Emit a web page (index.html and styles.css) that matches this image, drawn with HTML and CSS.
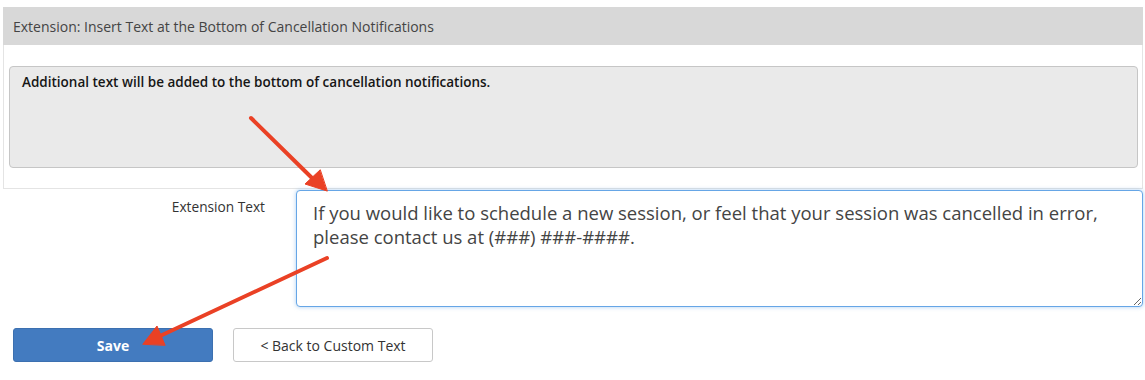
FILE: index.html
```html
<!DOCTYPE html>
<html lang="en">
<head>
  <meta charset="UTF-8" />
  <title>Cancellation Notification Extension</title>
  <link rel="stylesheet" href="styles.css">
</head>
<body>
  <div class="page">
    <div class="panel">
      <div class="panel-head">Extension: Insert Text at the Bottom of Cancellation Notifications</div>
      <div class="panel-body">
        <div class="info">Additional text will be added to the bottom of cancellation notifications.</div>
      </div>
    </div>

    <div class="form-row">
      <label class="form-label" for="extText">Extension Text</label>
      <textarea id="extText" class="form-text">If you would like to schedule a new session, or feel that your session was cancelled in error, please contact us at (###) ###-####.</textarea>
    </div>

    <div class="actions">
      <button class="btn btn-primary">Save</button>
      <button class="btn btn-default">&lt; Back to Custom Text</button>
    </div>

    <!-- annotation arrows -->
    <svg class="marks" width="1145" height="380" viewBox="0 0 1145 380">
      <g stroke="#ea4125" stroke-width="4" stroke-linecap="round" fill="#ea4125">
        <line x1="251" y1="118" x2="312" y2="178" />
        <polygon points="327,191 305,184 320,170" stroke-width="1" stroke-linejoin="round" />
        <line x1="327" y1="258" x2="160" y2="336" />
        <polygon points="143,344 157,326 165,345" stroke-width="1" stroke-linejoin="round" />
      </g>
    </svg>
  </div>
</body>
</html>
```

FILE: styles.css
```css
* {
  box-sizing: border-box;
}
html, body {
  margin: 0;
  padding: 0;
  background: #fff;
  font-family: "Open Sans", Lato, sans-serif;
  color: #333;
}
.page {
  position: relative;
  padding: 7px 2px 0 3px;
  height: 380px;
}
.panel {
  border: 1px solid #e4e4e4;
  border-top: none;
}
.panel-head {
  height: 38px;
  background: #d8d8d8;
  margin: 0 -1px;
  padding: 0 10px;
  display: flex;
  align-items: center;
  font-size: 14px;
  color: #444;
}
.panel-body {
  padding: 21px 4px 20px 5px;
}
.info {
  height: 102px;
  background: #eaeaea;
  border: 1px solid #c6c6c6;
  border-radius: 4px;
  padding: 6px 12px;
  font-size: 13.5px;
  font-weight: 600;
  color: #161616;
}
.form-row {
  display: flex;
  gap: 31px;
  margin-top: 1px;
}
.form-label {
  width: 262px;
  text-align: right;
  padding-top: 7px;
  font-size: 13.7px;
  color: #333;
}
.form-text {
  width: 847px;
  height: 117px;
  border: 1px solid #66a6e6;
  border-radius: 4px;
  box-shadow: 0 0 4px rgba(102, 166, 230, 0.55);
  padding: 10px 16px;
  font-family: inherit;
  font-size: 18.5px;
  line-height: 23.5px;
  color: #444;
  outline: none;
}
.actions {
  display: flex;
  gap: 20px;
  margin-top: 21px;
  padding-left: 10px;
}
.btn {
  width: 200px;
  height: 34px;
  border-radius: 3px;
  font-family: inherit;
  font-size: 14px;
  cursor: pointer;
}
.btn-primary {
  background: #437bc0;
  border: 1px solid #3c70b0;
  color: #fff;
  font-weight: bold;
}
.btn-default {
  background: #fff;
  border: 1px solid #c8c8c8;
  color: #333;
}
.marks {
  position: absolute;
  top: 0;
  left: 0;
  pointer-events: none;
}
```
